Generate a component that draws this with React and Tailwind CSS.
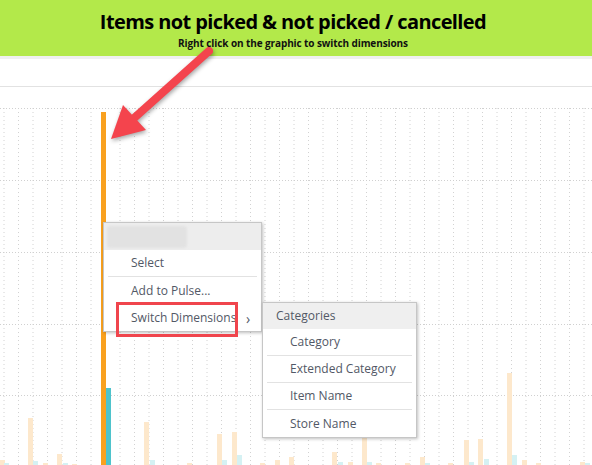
import React from "react";

const FONT = { fontFamily: '"Open Sans", "Noto Sans", sans-serif' };

// [x, top, kind] kind: o = orange, t = teal, lo = light orange, lt = light teal
const BARS = [
  [0, 460, "lo"], [4, 463, "lt"], [28, 418, "lo"], [33, 461, "lt"], [43, 463, "lo"],
  [57, 454, "lo"], [63, 463, "lt"], [72, 464, "lo"], [101, 112, "o"], [106, 388, "t"],
  [144, 422, "lo"], [150, 460, "lt"], [187, 463, "lo"], [217, 434, "lo"], [222, 460, "lt"],
  [232, 432, "lo"], [237, 455, "lt"], [260, 463, "lo"], [275, 460, "lo"], [289, 457, "lo"],
  [332, 452, "lo"], [338, 462, "lt"], [348, 462, "lo"], [362, 437, "lo"], [367, 462, "lt"],
  [376, 463, "lo"], [405, 463, "lo"], [420, 457, "lo"], [425, 463, "lt"], [448, 463, "lo"],
  [464, 440, "lo"], [469, 462, "lt"], [478, 439, "lo"], [484, 459, "lt"], [507, 373, "lo"],
  [512, 455, "lt"], [522, 460, "lo"], [536, 463, "lo"], [580, 462, "lo"], [585, 463, "lt"],
];

const COLORS = { o: "#f9a11f", t: "#4ec3cc", lo: "#fde8cc", lt: "#d5f1f3" };

function Chart() {
  const vLines = Array.from({ length: 41 }, (_, i) => 4 + i * 14.5);
  const hLines = [108, 180, 252, 324, 395];
  return (
    <svg viewBox="0 87 592 378" className="block h-[378px] w-full">
      {vLines.map((x) => (
        <line key={x} x1={x} x2={x} y1={108} y2={465} stroke="#d2d2d2" strokeDasharray="1 3" />
      ))}
      {hLines.map((y) => (
        <line key={y} x1={0} x2={592} y1={y + 0.5} y2={y + 0.5} stroke="#d0d0d0" strokeDasharray="1 2" />
      ))}
      {BARS.map(([x, top, kind]) => (
        <rect key={x} x={x} y={top} width={5} height={465 - top} fill={COLORS[kind]} />
      ))}
    </svg>
  );
}

function Arrow() {
  return (
    <svg
      className="pointer-events-none absolute left-0 top-0"
      width="592"
      height="200"
      style={{ filter: "drop-shadow(1px 2px 2px rgba(0,0,0,0.35))" }}
    >
      <line x1="209" y1="51" x2="133" y2="119" stroke="#f4444d" strokeWidth="8" strokeLinecap="round" />
      <polygon points="111,139 123,105 146,130" fill="#f4444d" />
    </svg>
  );
}

function MenuRow({ children, line = true }) {
  return (
    <div className={`flex h-[27px] items-center ${line ? "mx-1 border-b border-[#e2e2e2]" : "mx-1"}`}>
      {children}
    </div>
  );
}

export default function App() {
  return (
    <div className="relative h-[465px] w-[592px] overflow-hidden bg-white" style={FONT}>
      <header className="flex h-[56px] flex-col items-center bg-[#b3e94a] pr-[6px] pt-[8px]">
        <h1 className="text-[20px] font-bold leading-[28px] tracking-[-0.6px] text-black">
          Items not picked &amp; not picked / cancelled
        </h1>
        <p className="text-[10px] font-bold leading-[14px] tracking-[-0.1px] text-[#111]">
          Right click on the graphic to switch dimensions
        </p>
      </header>
      <div className="h-[3px] bg-[#f0f0f0]" />
      <div className="h-[28px] border-b border-[#e2e2e2]" />
      <Chart />

      <div className="absolute left-[103px] top-[222px] w-[159px] border border-[#c6c6c6] bg-white text-[12px] text-[#525866] shadow-[1px_1px_3px_rgba(0,0,0,0.25)]">
        <div className="flex h-[27px] items-center bg-[#ededed] pl-[3px]">
          <div className="h-[22px] w-[80px] rounded-sm bg-[#e2e2e2] blur-[1px]" />
        </div>
        <MenuRow>
          <span className="pl-[23px]">Select</span>
        </MenuRow>
        <MenuRow line={false}>
          <span className="pl-[23px]">Add to Pulse...</span>
        </MenuRow>
        <div className="relative flex h-[27px] items-center">
          <span className="pl-[27px]">Switch Dimensions</span>
          <span className="absolute left-[142px] top-[4px] text-[14px]">›</span>
        </div>
      </div>

      <div className="absolute left-[116px] top-[302px] h-[35px] w-[122px] border-[3px] border-[#f0454d]" />

      <div className="absolute left-[262px] top-[302px] w-[155px] border border-[#c6c6c6] bg-white text-[12px] text-[#525866] shadow-[1px_1px_3px_rgba(0,0,0,0.25)]">
        <div className="flex h-[26px] items-center bg-[#efefef] pl-[13px]">Categories</div>
        <MenuRow>
          <span className="pl-[23px]">Category</span>
        </MenuRow>
        <MenuRow>
          <span className="pl-[23px]">Extended Category</span>
        </MenuRow>
        <MenuRow>
          <span className="pl-[23px]">Item Name</span>
        </MenuRow>
        <MenuRow line={false}>
          <span className="pl-[23px]">Store Name</span>
        </MenuRow>
      </div>

      <Arrow />
    </div>
  );
}
